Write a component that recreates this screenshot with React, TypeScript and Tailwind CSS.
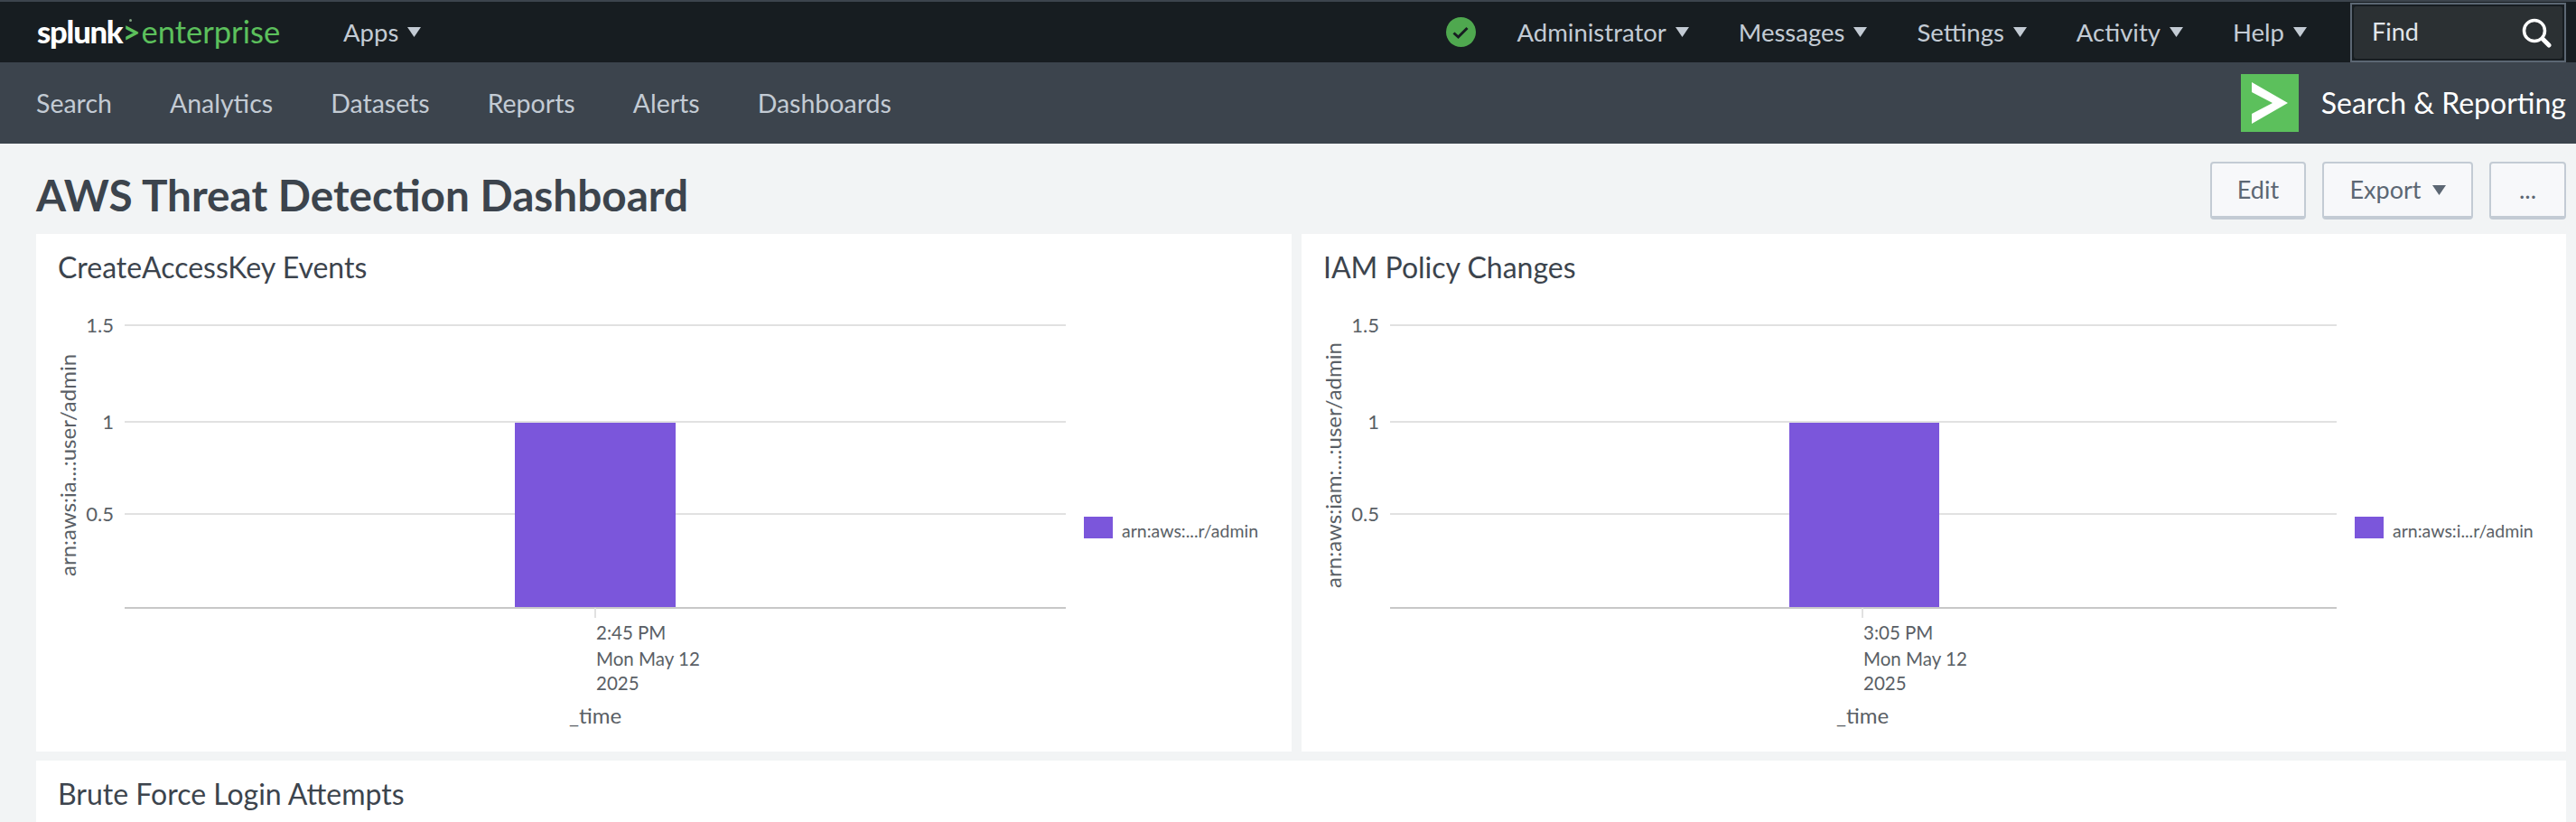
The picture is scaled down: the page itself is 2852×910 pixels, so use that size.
const font = "font-['Lato','Liberation_Sans',sans-serif]";

function Caret({ color = "#c3cbd4" }: { color?: string }) {
  return (
    <svg width="15" height="11" viewBox="0 0 15 11" className="shrink-0">
      <polygon points="0,0 15,0 7.5,11" fill={color} />
    </svg>
  );
}

function TopMenu({ label }: { label: string }) {
  return (
    <div className="flex items-center gap-[10px] text-[27.5px] text-[#c3cbd4]">
      <span>{label}</span>
      <Caret />
    </div>
  );
}

type ChartProps = {
  width: number;
  yLabel: string;
  legend: string;
  time: string;
  gridEnd: number;
  barLeft: number;
  barRight: number;
  center: number;
  legendX: number;
};

function ColumnChart({ width, yLabel, legend, time, gridEnd, barLeft, barRight, center, legendX }: ChartProps) {
  const grid = [
    { y: 20, label: "1.5" },
    { y: 127, label: "1" },
    { y: 229, label: "0.5" },
  ];
  return (
    <svg width={width} height={492} className="block">
      {grid.map((g) => (
        <g key={g.label}>
          <line x1={98} x2={gridEnd} y1={g.y} y2={g.y} stroke="#e1e1e1" strokeWidth={2} />
          <text x={86} y={g.y + 8} textAnchor="end" fontSize={22} fill="#5a5f66">
            {g.label}
          </text>
        </g>
      ))}
      <rect x={barLeft} y={128} width={barRight - barLeft} height={204} fill="#7b56db" />
      <line x1={98} x2={gridEnd} y1={333} y2={333} stroke="#c8c8c8" strokeWidth={2} />
      <line x1={center} x2={center} y1={333} y2={344} stroke="#e1e1e1" strokeWidth={2} />
      <text fontSize={20.5} fill="#5a5f66">
        <tspan x={center + 1} y={368}>{time}</tspan>
        <tspan x={center + 1} y={397}>Mon May 12</tspan>
        <tspan x={center + 1} y={424}>2025</tspan>
      </text>
      <text x={center} y={461} textAnchor="middle" fontSize={24} fill="#5a5f66">
        _time
      </text>
      <text
        transform="translate(44 175) rotate(-90)"
        textAnchor="middle"
        fontSize={24}
        fill="#5a5f66"
      >
        {yLabel}
      </text>
      <rect x={legendX} y={232} width={32} height={24} fill="#7b56db" />
      <text x={legendX + 42} y={255} fontSize={19.5} fill="#5a5f66">
        {legend}
      </text>
    </svg>
  );
}

function Button({ children }: { children: React.ReactNode }) {
  return (
    <div className="h-[64px] flex items-center justify-center gap-[12px] rounded-[4px] border-2 border-b-[4px] border-[#c3cbd4] bg-[#f7f8fa] text-[27px] text-[#5c6773]">
      {children}
    </div>
  );
}

function PanelTitle({ children }: { children: React.ReactNode }) {
  return <div className="h-[81px] px-[24px] pt-[19px] text-[32px] leading-[36px] text-[#3c444d]">{children}</div>;
}

export default function App() {
  return (
    <div className={`h-[910px] w-[2852px] overflow-hidden bg-[#f2f4f5] ${font}`}>
      {/* top bar */}
      <div className="h-[69px] flex items-center bg-[#171d21] border-t-2 border-[#3c444d] pl-[41px] pr-[11px]">
        <div className="relative w-[339px] flex items-baseline leading-none whitespace-nowrap text-[34.5px]">
          <span className="font-black tracking-[-1.2px] text-white">splunk</span>
          <span className="font-bold text-[#5cc05c] mr-[1px]">&gt;</span>
          <span className="text-[#5cc05c]">enterprise</span>
          <span className="absolute left-[102px] top-[3px] h-[3px] w-[3px] rounded-full bg-[#7fa07f]" />
        </div>
        <TopMenu label="Apps" />
        <div className="ml-auto flex items-center gap-[55px]">
          <svg width="33" height="33" viewBox="0 0 33 33" className="mr-[-10px]">
            <circle cx="16.5" cy="16.5" r="16.5" fill="#4fa84f" />
            <path d="M8.5 17.5 L13.5 22 L23.5 12" fill="none" stroke="#171d21" strokeWidth="3" />
          </svg>
          <TopMenu label="Administrator" />
          <TopMenu label="Messages" />
          <TopMenu label="Settings" />
          <TopMenu label="Activity" />
          <TopMenu label="Help" />
        </div>
        <div className="ml-[48px] h-[66px] w-[239px] border-2 border-[#5c6773] bg-[#171d21] p-[2px]">
          <div className="flex h-full items-center justify-between rounded-[3px] bg-[#2b3033] pl-[20px] pr-[12px] text-[27px] text-[#e1e6eb]">
            <span>Find</span>
            <svg width="34" height="34" viewBox="0 0 34 34">
              <circle cx="15" cy="15" r="11.5" fill="none" stroke="#fff" strokeWidth="3.5" />
              <line x1="24" y1="24" x2="31" y2="31" stroke="#fff" strokeWidth="5" strokeLinecap="round" />
            </svg>
          </div>
        </div>
      </div>

      {/* app bar */}
      <div className="h-[90px] flex items-center bg-[#3c444d] pl-[40px] pr-[11px] text-[28.5px] text-[#c3cbd4]">
        <div className="flex items-center gap-[64px]">
          <span>Search</span>
          <span>Analytics</span>
          <span>Datasets</span>
          <span>Reports</span>
          <span>Alerts</span>
          <span>Dashboards</span>
        </div>
        <div className="ml-auto flex items-center gap-[25px]">
          <svg width="64" height="64" viewBox="0 0 64 64">
            <rect width="64" height="64" fill="#5cc05c" />
            <polygon points="12,9 52,32 12,55 12,44 35,32 12,20" fill="#fff" />
          </svg>
          <span className="text-[32px] text-white">Search &amp; Reporting</span>
        </div>
      </div>

      {/* title row */}
      <div className="h-[100px] flex items-start justify-between pl-[40px] pr-[11px]">
        <h1 className="text-[47.7px] font-bold leading-none text-[#3c444d] mt-[33px]">AWS Threat Detection Dashboard</h1>
        <div className="flex gap-[18px] mt-[20px]">
          <div className="w-[106px]"><Button>Edit</Button></div>
          <div className="w-[167px]"><Button>Export <Caret color="#5c6773" /></Button></div>
          <div className="w-[85px]"><Button>...</Button></div>
        </div>
      </div>

      {/* dashboard panels */}
      <div className="pl-[40px] pr-[11px]">
        <div className="flex gap-[11px]">
          <div className="w-[1390px] bg-white">
            <PanelTitle>CreateAccessKey Events</PanelTitle>
            <ColumnChart
              width={1390}
              yLabel="arn:aws:ia...:user/admin"
              legend="arn:aws:...r/admin"
              time="2:45 PM"
              gridEnd={1140}
              barLeft={530}
              barRight={708}
              center={619}
              legendX={1160}
            />
          </div>
          <div className="flex-1 bg-white">
            <PanelTitle>IAM Policy Changes</PanelTitle>
            <ColumnChart
              width={1400}
              yLabel="arn:aws:iam:...:user/admin"
              legend="arn:aws:i...r/admin"
              time="3:05 PM"
              gridEnd={1146}
              barLeft={540}
              barRight={706}
              center={621}
              legendX={1166}
            />
          </div>
        </div>
        <div className="mt-[10px] h-[100px] bg-white">
          <PanelTitle>Brute Force Login Attempts</PanelTitle>
        </div>
      </div>
    </div>
  );
}
